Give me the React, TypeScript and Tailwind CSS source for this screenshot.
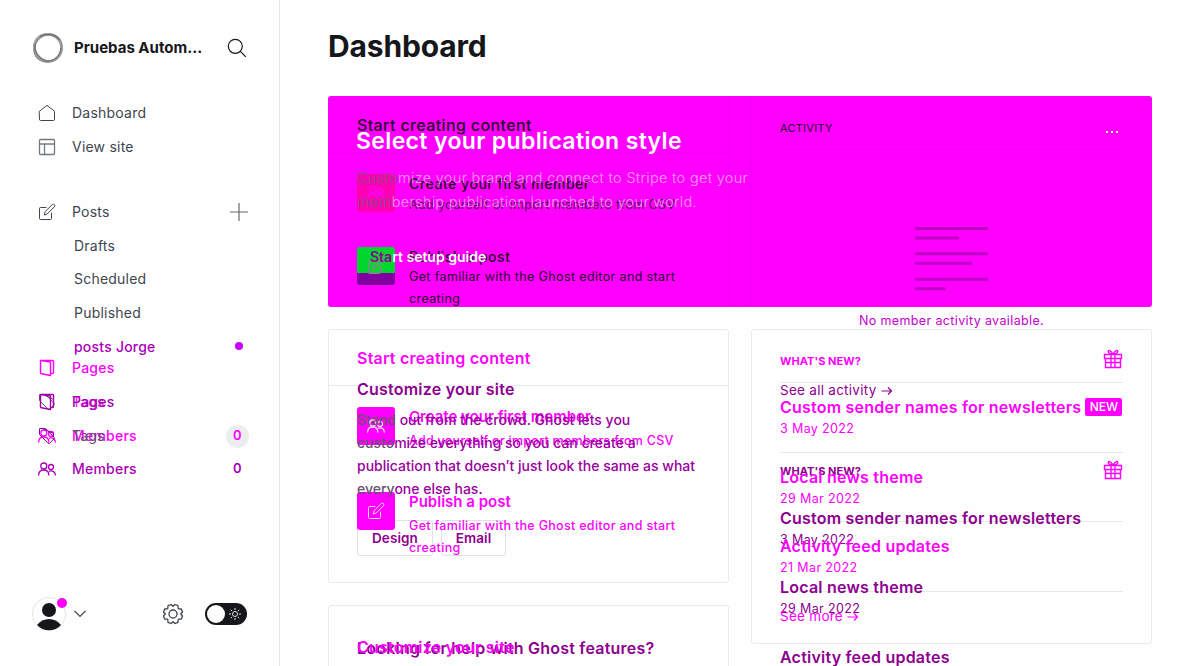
import type { ReactNode } from "react";

const cx = (...c: (string | undefined)[]) => c.filter(Boolean).join(" ");

function T({ c, children }: { c?: string; children: ReactNode }) {
  return <div className={cx("h-5 leading-5 whitespace-nowrap", c)}>{children}</div>;
}

function Svg({ c, children }: { c?: string; children: ReactNode }) {
  return (
    <svg viewBox="0 0 18 18" fill="none" stroke="currentColor" strokeLinecap="round" strokeLinejoin="round" className={cx("size-[18px] shrink-0", c)}>
      {children}
    </svg>
  );
}

const Home = () => (
  <Svg><path d="M1.5 7.2 9 1.4l7.5 5.8v8.3a1 1 0 0 1-1 1h-13a1 1 0 0 1-1-1z" /></Svg>
);
const Layout = () => (
  <Svg c="text-[#747a83]"><rect x="1.5" y="1.5" width="15" height="15" rx="1" strokeWidth="1.300" /><path d="M1.5 6h15M6.5 6v10.5" strokeWidth="1.300" /></Svg>
);
const Pencil = ({ c }: { c?: string }) => (
  <Svg c={c}><path d="M8 4.5H2.5a1 1 0 0 0-1 1v10a1 1 0 0 0 1 1h10a1 1 0 0 0 1-1V10M6.3 11.7l1-3.2 6.9-6.9a1.3 1.3 0 0 1 2.2 2.2l-6.9 6.9z" /></Svg>
);
const PagesIcon = ({ c }: { c?: string }) => (
  <Svg c={c}><path strokeWidth="1.400" d="M2.500 1.500h12a1 1 0 0 1 1 1v11a1 1 0 0 1-1 1H12.500M2.500 1.500l9 1.300a1 1 0 0 1 1 1v12.700l-9-1.800a1 1 0 0 1-1-1z" /></Svg>
);
const TagIcon = ({ c }: { c?: string }) => (
  <Svg c={c}><path d="M1.5 2v5.5l8.5 8.7a1.2 1.2 0 0 0 1.7 0l4.2-4.3a1.2 1.2 0 0 0 0-1.7L7.5 1.5H2M5 1.5l10.5 5v3" /></Svg>
);
const People = ({ c }: { c?: string }) => (
  <Svg c={c}><g strokeWidth="1.300"><circle cx="5.800" cy="6" r="3" /><circle cx="13" cy="7" r="2.500" /><path d="M.7 15c0-3.200 2-5 5.100-5s5 1.800 5 5M11.500 11.200c3.200-1 5.800.8 5.800 3.800" /></g></Svg>
);
const Gift = () => (
  <svg viewBox="0 0 20 20" fill="none" stroke="#ff00ff" strokeWidth="1.400" className="size-5">
    <path d="M1.5 5.500h17v4h-17zM2.500 9.500v9h15v-9M2.500 13.500h15M8 5.500v13M12 5.500v13M10 5.200C8 1 5 .5 5.200 2.500S8 5 10 5.200C12 1 15 .5 14.800 2.500S12 5 10 5.200" />
  </svg>
);
const Arrow = () => (
  <svg viewBox="0 0 12 10" fill="none" stroke="currentColor" strokeWidth="1.200" className="ml-[4px] inline-block h-[10px] w-3 align-[-1px]">
    <path d="M.5 5h10M7 1.500 10.500 5 7 8.500" />
  </svg>
);

function Nav({ icon, c, children, end }: { icon: ReactNode; c?: string; children: ReactNode; end?: ReactNode }) {
  return (
    <div className={cx("flex h-[18px] items-center pr-8 pl-[38px] text-[14px] tracking-[0.22px]", c)}>
      {icon}
      <span className="ml-4 flex-1 leading-5">{children}</span>
      {end}
    </div>
  );
}

function Sidebar() {
  return (
    <aside className="flex h-[666px] w-[280px] shrink-0 flex-col border-r border-[#e3e6ea] text-[#3f4650]">
      <div className="mt-8 flex h-8 items-center pr-8 pl-8">
        <svg viewBox="0 0 32 32" fill="none" className="size-8">
          <circle cx="16" cy="16" r="13.600" stroke="#9a9a9a" strokeWidth="2.800" />
          <ellipse cx="15.500" cy="15.700" rx="14.500" ry="13.500" stroke="#aaa" transform="rotate(35 16 16)" />
          <ellipse cx="16" cy="16" rx="14.800" ry="12.700" stroke="#888" transform="rotate(-45 16 16)" />
          <path d="M8 4.500C15 1 23 2 28 8M3 12c-1 8 4 15 12 17 8 0 13-5 14-13" stroke="#777" strokeWidth="1.400" />
        </svg>
        <span className="ml-[10px] flex-1 text-[15px] font-bold whitespace-nowrap text-[#15171a]">Pruebas Autom...</span>
        <svg viewBox="0 0 20 20" fill="none" stroke="#15171a" strokeWidth="1.200" className="size-5"><circle cx="8.300" cy="8.300" r="7" /><path d="m13.300 13.300 5.500 5.500" /></svg>
      </div>
      <Nav icon={<Home />} c="mt-10">Dashboard</Nav>
      <Nav icon={<Layout />} c="mt-4">View site</Nav>
      <Nav icon={<Pencil />} c="mt-[47px]" end={<svg viewBox="0 0 18 18" stroke="#626973" strokeWidth="1.200" className="-mr-px size-[18px]"><path d="M9 0v18M0 9h18" /></svg>}>Posts</Nav>
      <div className="mt-[15px] pl-[74px] text-[14px] tracking-[0.22px]">
        <T>Drafts</T>
        <T c="mt-[13px]">Scheduled</T>
        <T c="mt-[14px]">Published</T>
        <div className="mt-[14px] flex items-center justify-between pr-9 text-[#ad00b8]">
          <T c="font-medium">posts Jorge</T>
          <span className="-mt-[2px] size-2 rounded-full bg-[#c800ff]" />
        </div>
      </div>
      <Nav icon={<PagesIcon />} c="mt-[2px] font-medium text-[#ff00ff]">Pages</Nav>
      <div className="mt-4 grid">
        <Nav icon={<TagIcon c="text-[#6b5070]" />} c="[grid-area:1/1] text-[#ff00ff]">Tags</Nav>
        <Nav icon={<PagesIcon />} c="[grid-area:1/1] font-medium text-[#a300ad]">Pages</Nav>
      </div>
      <div className="mt-4 grid">
        <Nav icon={<People />} c="[grid-area:1/1] font-medium text-[#ff00ff]" end={<span className="-mr-[2px] flex size-[23px] items-center justify-center rounded-full bg-[#ebeef0] text-[13px] font-semibold">0</span>}>Members</Nav>
        <Nav icon={<TagIcon c="text-[#900096]" />} c="[grid-area:1/1] text-[#655169]">Tags</Nav>
      </div>
      <Nav icon={<People />} c="mt-[15px] font-medium text-[#a800b4]" end={<span className="-mr-[2px] w-[23px] text-center text-[13px] font-semibold">0</span>}>Members</Nav>
      <div className="mt-[119px] flex h-[34px] items-center pr-8 pl-8">
        <div className="relative size-[34px]">
          <svg viewBox="0 0 34 34" className="size-[34px]"><circle cx="17" cy="17" r="16.500" fill="none" stroke="#e3e6ea" /><circle cx="17" cy="13" r="7" fill="#15171a" /><path d="M5 28c6-8 18-8 24 0-6 7-18 7-24 0" fill="#15171a" /></svg>
          <span className="absolute top-px left-[25px] size-[10px] rounded-full bg-[#ff00ff]" />
        </div>
        <svg viewBox="0 0 12 8" fill="none" stroke="#3f4650" strokeWidth="1.200" className="ml-2 h-2 w-3"><path d="m.5 1 5.500 5.500L11.500 1" /></svg>
        <svg viewBox="0 0 24 24" fill="none" stroke="#3f4650" strokeWidth="1.300" strokeLinejoin="round" className="ml-[75px] size-6">
          <circle cx="12" cy="12" r="4" />
          <path d="m10 2.500 2 1.800 2-1.800 3 1.200.2 2.700.4.400 2.700.2 1.200 3-1.800 2 1.800 2-1.200 3-2.700.2-.4.400-.2 2.700-3 1.200-2-1.800-2 1.800-3-1.200-.2-2.700-.4-.4-2.700-.2-1.200-3 1.800-2-1.800-2 1.200-3 2.700-.2.400-.4.200-2.700z" />
        </svg>
        <div className="ml-auto flex h-[22px] w-[42px] items-center justify-between rounded-full bg-[#15171a] px-[2px]">
          <span className="size-[18px] rounded-full bg-white" />
          <svg viewBox="0 0 14 14" fill="none" stroke="#ddd" className="mr-[3px] size-[14px]"><circle cx="7" cy="7" r="2.500" /><path d="M7 1v2M7 11v2M1 7h2M11 7h2M2.800 2.800l1.300 1.300M9.900 9.900l1.300 1.300M11.200 2.800 9.900 4.100M4.100 9.900l-1.300 1.300" /></svg>
        </div>
      </div>
    </aside>
  );
}

function Frames() {
  return (
    <div className="[grid-area:1/1]">
      <div className="flex h-[211px] items-start justify-between rounded-[3px] bg-[#ff00ff]">
        <div className="h-[211px] w-[401px] border-r border-[#f400f4]"><div className="h-[57px] border-b border-[#f400f4]" /></div>
        <div className="h-[211px] w-[401px] border-l border-[#f400f4]" />
      </div>
      <div className="mt-[22px] flex items-start justify-between">
        <div className="w-[401px]">
          <div className="h-[254px] rounded-[3px] border border-[#e8ebed]"><div className="h-14 border-b border-[#e8ebed]" /></div>
          <div className="mt-[22px] h-[120px] rounded-[3px] border border-[#e8ebed]" />
        </div>
        <div className="h-[315px] w-[401px] rounded-[3px] border border-[#e8ebed] px-7">
          <div className="h-[53px] border-b border-[#e6e9ec]" />
          <div className="h-[70px] border-b border-[#e6e9ec]" />
          <div className="h-[69px] border-b border-[#e6e9ec]" />
          <div className="h-[70px] border-b border-[#e6e9ec]" />
        </div>
      </div>
    </div>
  );
}

const strong = "text-[16px] font-semibold tracking-[0.22px]";
const date = "text-[12.500px] tracking-[0.37px]";
const small = "text-[12.500px] tracking-[0.37px]";

function EarlierLayer() {
  return (
    <div className="flex justify-between text-[#8d008f] [grid-area:1/1]">
      <div className="w-[401px] px-[29px]">
        <T c="mt-[19px] text-[16px] font-medium tracking-[0.38px] text-[#28002a]">Start creating content</T>
        <div className="mt-[39px] flex gap-[14px] text-[#28002a]">
          <div className="flex size-[38px] items-center justify-center rounded-[3px] bg-[#ff00b4] text-[#ff00ff]"><People /></div>
          <div><T c="text-[14px] font-medium tracking-[0.54px]">Create your first member</T><T c={cx("mt-px text-[#5c0060]", small)}>Add yourself or import members from CSV</T></div>
        </div>
        <div className="mt-8 flex gap-[14px] text-[#28002a]">
          <div className="flex size-[38px] items-center justify-center rounded-[3px] bg-[linear-gradient(#00d62e_26px,#8000a0_26px)] text-[#c85ec4]"><Pencil /></div>
          <div className="h-[53px]"><T c="text-[14px] font-medium tracking-[0.54px]">Publish a post</T><div className={cx(small, "-mt-px leading-[22px] whitespace-nowrap")}>Get familiar with the Ghost editor and start<br />creating</div></div>
        </div>
        <T c={cx("mt-[79px]", strong)}>Customize your site</T>
        <p className="relative z-10 mt-[9px] text-[14px] leading-[23px] font-medium whitespace-nowrap text-[#99009e]">
          <span className="text-[#6b5070]">Stand</span> out from the crowd. Ghost lets you<br /><span className="text-[#6b5070]">custo</span>mize everything so you can create a<br />publication that doesn’t just look the same as what<br /><span className="text-[#6b5070]">every</span>one else has.
        </p>
        <div className="mt-5 flex gap-2 text-[13.500px] font-semibold tracking-[0.1px]">
          <div className="flex h-9 w-[76px] items-center justify-center rounded-[3px] border border-[#dfe2e4]">Design</div>
          <div className="flex h-9 w-[65px] items-center justify-center rounded-[3px] border border-[#dfe2e4]">Email</div>
        </div>
        <T c={cx("mt-[82px]", strong)}>Looking for help with Ghost features?</T>
      </div>
      <div className="w-[401px] px-[29px]">
        <T c="mt-[22px] text-[11px] tracking-[0.25px] text-[#28002a]">ACTIVITY</T>
        <div className="mt-[11px] h-px bg-[#f400f4]" />
        <svg viewBox="0 0 74 68" className="mt-[75px] ml-[134px] h-[68px] w-[74px]" stroke="#bd00c4" strokeWidth="3" strokeLinecap="round"><path d="M2.500 3.500h70M2.500 13h41M2.500 28.700h70M2.500 38.200h54M2.500 54.300h70M2.500 63.700h28" /></svg>
        <T c={cx("mt-[18px] text-center text-[#c400cf]", small)}>No member activity available.</T>
        <T c="mt-[49px] text-[13.500px] tracking-[0.27px]">See all activity<Arrow /></T>
        <T c="mt-[61px] text-[11px] font-bold tracking-[0.05px]">WHAT'S NEW?</T>
        <T c={cx("mt-[27px]", strong)}>Custom sender names for newsletters</T>
        <T c={cx("mt-[2px]", date)}>3 May 2022</T>
        <T c={cx("mt-[27px]", strong)}>Local news theme</T>
        <T c={cx("mt-[2px]", date)}>29 Mar 2022</T>
        <T c={cx("mt-7", strong)}>Activity feed updates</T>
      </div>
    </div>
  );
}

function CurrentLayer() {
  return (
    <div className="flex justify-between text-[#ff00ff] [grid-area:1/1]">
      <div className="w-[401px] px-[29px]">
        <div className="-ml-px mt-[31px] h-7 text-[23px] leading-7 font-semibold tracking-[0.35px] whitespace-nowrap text-white">Select your publication style</div>
        <p className="mt-[11px] text-[14.500px] leading-[24px] font-light tracking-[0.32px] whitespace-nowrap text-[#ffffff99]"><span className="text-[#805080]">Custo</span>mize your brand and connect to Stripe to get your<br /><span className="text-[#805080]">mem</span>bership publication launched to your world.</p>
        <T c="mt-[33px] pl-[13px] text-[14px] font-semibold text-white"><span className="text-[#8b0095]">Sta</span>rt setup guide</T>
        <T c={cx("mt-[81px]", strong)}>Start creating content</T>
        <div className="mt-[39px] flex gap-[14px]">
          <div className="flex size-[38px] items-center justify-center rounded-[3px] bg-[#ff00ff] text-[#ffd8ff]"><People /></div>
          <div><T c="text-[15px] font-semibold">Create your first member</T><T c="mt-[4px] text-[12.500px] font-medium tracking-[0.26px]">Add yourself or import members from CSV</T></div>
        </div>
        <div className="mt-[41px] flex gap-[14px]">
          <div className="flex size-[38px] items-center justify-center rounded-[3px] bg-[#ff00ff] text-[#ffd8ff]"><Pencil /></div>
          <div><T c="text-[15px] font-semibold">Publish a post</T><div className="mt-[3px] text-[12.500px] leading-[22px] font-medium tracking-[0.31px] whitespace-nowrap">Get familiar with the Ghost editor and start<br />creating</div></div>
        </div>
        <T c={cx("mt-[78px]", strong)}>Customize your site</T>
      </div>
      <div className="w-[401px] px-[29px]">
        <div className="mt-[26px] mr-[5px] flex h-5 items-center justify-end gap-[3px]"><i className="size-[2px] bg-white" /><i className="size-[2px] bg-white" /><i className="size-[2px] bg-white" /></div>
        <div className="mt-[207px] flex h-5 items-center justify-between"><T c="mt-[3px] text-[11px] font-bold tracking-[0.05px]">WHAT'S NEW?</T><Gift /></div>
        <div className="mt-[28px] flex h-5 items-center gap-1"><T c={strong}>Custom sender names for newsletters</T><span className="flex h-[18px] w-[37px] items-center justify-center rounded-[2px] bg-[#ff00ff] text-[12px] font-medium text-white">NEW</span></div>
        <T c={cx("mt-[2px]", date)}>3 May 2022</T>
        <div className="mt-[21px] flex h-5 justify-end"><Gift /></div>
        <T c={cx("-mt-[13px]", strong)}>Local news theme</T>
        <T c={cx("mt-[2px]", date)}>29 Mar 2022</T>
        <T c={cx("mt-[27px]", strong)}>Activity feed updates</T>
        <T c={cx("mt-[2px]", date)}>21 Mar 2022</T>
        <T c="mt-[28px] text-[13.500px] tracking-[0.27px]">See more<Arrow /></T>
      </div>
    </div>
  );
}

export default function App() {
  return (
    <div className="flex h-[666px] w-[1200px] overflow-hidden bg-[#fefefe] font-[Inter,sans-serif]">
      <Sidebar />
      <main className="w-[872px] pl-12">
        <h1 className="mt-[26px] h-10 text-[30px] leading-10 font-bold tracking-[-0.150px] text-[#15171a]">Dashboard</h1>
        <div className="mt-[30px] grid">
          <Frames />
          <EarlierLayer />
          <CurrentLayer />
        </div>
      </main>
    </div>
  );
}
